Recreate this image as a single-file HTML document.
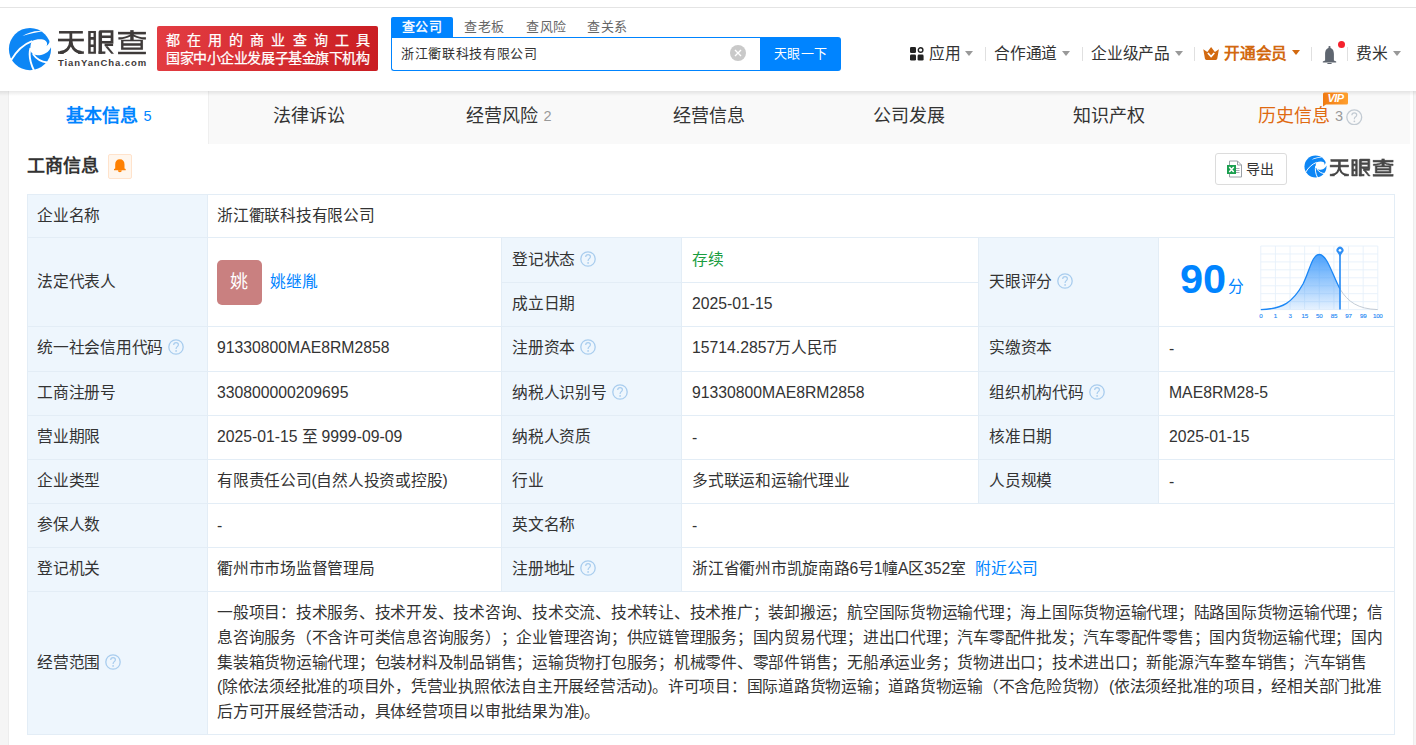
<!DOCTYPE html>
<html lang="zh-CN"><head><meta charset="utf-8">
<style>
*{margin:0;padding:0;box-sizing:border-box}
html,body{width:1416px;height:745px;overflow:hidden;background:#f5f5f5;font-family:"Liberation Sans",sans-serif;color:#333;text-spacing-trim:space-all}
.abs{position:absolute}
.nw{white-space:nowrap}
#topstrip{left:0;top:0;width:1416px;height:7px;background:#fff}
#topline{left:0;top:7px;width:1416px;height:1px;background:#e4e4e4}
#header{left:0;top:8px;width:1416px;height:83px;background:#fff}
#banner{left:157px;top:26px;width:221px;height:45px;border-radius:2px;background:linear-gradient(100deg,#e33d43 0%,#d42a2f 60%,#c91d22 100%)}
.bt{color:#fff;font-size:13px;font-weight:bold;line-height:16px}
.stab{top:17px;height:20px;font-size:13px;line-height:20px;color:#666;letter-spacing:0.5px}
#stab1{left:391px;width:62px;background:#0084ff;color:#fff;border-radius:2px 2px 0 0;text-align:center;-webkit-text-stroke:0.35px #fff}
#sinput{left:391px;top:37px;width:370px;height:34px;border:1px solid #0084ff;border-right:none;border-radius:0 0 0 3px;background:#fff}
#sbtn{left:760px;top:37px;width:81px;height:34px;background:#0084ff;border-radius:0 3px 3px 0;color:#fff;font-size:13px;line-height:34px;text-align:center;letter-spacing:0.5px}
.nav{top:43px;font-size:15.75px;line-height:22px;color:#333;letter-spacing:-0.25px}
.tri{width:0;height:0;border-left:4.5px solid transparent;border-right:4.5px solid transparent;border-top:5px solid #999}
.sep{top:47px;width:1px;height:14px;background:#e0e0e0}
#panel{left:9px;top:91px;width:1404px;height:660px;background:#fff}
#tabbar{left:9px;top:91px;width:1401px;height:53px;background:#f9f9f9}
#tabshadow{left:0;top:91px;width:1416px;height:5px;background:linear-gradient(rgba(0,0,0,0.085),rgba(0,0,0,0))}
.tab{top:89px;width:200px;height:54px;font-size:18px;line-height:54px;text-align:center;color:#333}
.tab .n{font-size:14.5px;color:#999;margin-left:5px;position:relative;top:-1.5px}
.hl{left:27px;width:1368px;height:1px;background:#e3edf6}
.vl{width:1px;background:#e3edf6}
.c{font-size:15.75px;color:#333;white-space:nowrap;letter-spacing:-0.25px}
.l{letter-spacing:0}
.q{display:inline-block;width:16px;height:16px;border:1px solid #b5d4f2;border-radius:50%;margin-left:6px;vertical-align:-2px;position:relative}
.q:after{content:"?";position:absolute;left:0;top:0;width:14px;line-height:14px;text-align:center;font-size:11px;color:#b5d4f2;font-style:normal}
.qg{display:inline-block;width:16.5px;height:16.5px;border:1.3px solid #c5ccd4;border-radius:50%;margin-left:5px;vertical-align:0px;position:relative;top:3px}
.qg:after{content:"?";position:absolute;left:0;top:0;width:13.9px;line-height:14px;text-align:center;font-size:12px;color:#bcc4cc;font-style:normal;font-weight:normal}
.qs{display:inline-block;margin-left:5px;vertical-align:-2px;color:#a9cdee}
.qg2{color:#c3cbd3;margin-left:5px;vertical-align:-3px}
</style></head><body>
<div class="abs" id="topstrip"></div>
<div class="abs" id="topline"></div>
<div class="abs" id="header"></div>

<!-- logo -->
<svg width="0" height="0" style="position:absolute">
 <defs>
  <symbol id="ic" viewBox="0 0 745 745">
   <circle cx="372" cy="374" r="357" fill="#0d86f5"/>
   <path d="M245 152 C340 92 470 55 585 72 C470 95 360 118 245 152 Z" fill="#fff"/>
   <path d="M50 565 C140 410 260 292 408 238" stroke="#fff" stroke-width="32" fill="none"/>
   <path d="M405 238 C480 205 580 195 640 235 C664 254 670 288 652 322 C682 300 700 272 708 238 L745 238 L745 345 L725 345 C700 420 600 480 500 478 C470 476 440 468 425 462 C395 440 375 400 378 360 C380 310 390 265 405 238 Z" fill="#fff"/>
   <path d="M380 355 C355 450 360 580 445 745" stroke="#fff" stroke-width="32" fill="none"/>
   <path d="M422 458 C480 540 560 592 665 602" stroke="#fff" stroke-width="32" fill="none"/>
  </symbol>
  <symbol id="tx" viewBox="0 0 1416 450">
   <g>
    <rect x="60" y="75" width="355" height="37"/>
    <rect x="45" y="190" width="385" height="38"/>
    <rect x="216" y="100" width="40" height="128"/>
    <path d="M236 215 C230 310 175 390 75 396" stroke-width="44" fill="none"/>
    <rect x="45" y="378" width="85" height="37"/>
    <path d="M236 215 C242 310 297 390 397 396" stroke-width="44" fill="none"/>
    <rect x="345" y="378" width="85" height="37"/>
    <path d="M495 75H610V415H495Z M532 105V165H575V105Z M532 205V275H575V205Z M532 312V385H575V312Z" fill-rule="evenodd"/>
    <path d="M650 90 Q650 65 675 65 H870 V262 H700 V415 H650 Z M700 102V142H830V102Z M700 178V225H830V178Z" fill-rule="evenodd"/>
    <rect x="650" y="380" width="100" height="35"/>
    <rect x="740" y="262" width="125" height="36"/>
    <path d="M745 300 L840 415 L878 415 L785 300 Z"/>
    <rect x="940" y="88" width="415" height="37"/>
    <rect x="1122" y="62" width="50" height="150"/>
    <path d="M1135 118 L1165 130 C1120 165 1040 190 975 200 L945 200 L945 168 L1000 168 C1050 158 1100 138 1135 118 Z"/>
    <path d="M1160 118 L1130 130 C1175 165 1255 190 1320 200 L1355 200 L1355 168 L1295 168 C1245 158 1195 138 1160 118 Z"/>
    <path d="M985 205H1310V355H985Z M1020 228V258H1275V228Z M1020 293V322H1275V293Z" fill-rule="evenodd"/>
    <rect x="940" y="385" width="415" height="35"/>
   </g>
  </symbol>
 </defs>
</svg>
<svg class="abs" style="left:8px;top:27px" width="44" height="44"><use href="#ic"/></svg>
<svg class="abs" style="left:55px;top:26px;fill:#3e3a39;stroke:#3e3a39" width="95" height="30.2" viewBox="0 0 1416 450" preserveAspectRatio="none"><use href="#tx"/></svg>
<div class="abs nw" style="left:58px;top:56.8px;font-size:9.5px;line-height:12px;font-weight:bold;color:#3e3a39;letter-spacing:0.9px">TianYanCha.com</div>

<div class="abs" id="banner"></div>
<div class="abs nw bt" style="left:166px;top:32px;font-size:14px;font-weight:normal;letter-spacing:7.1px;-webkit-text-stroke:0.25px #fff">都在用的商业查询工具</div>
<div class="abs nw bt" style="left:166px;top:50px;font-size:14px;font-weight:normal;letter-spacing:-0.43px;-webkit-text-stroke:0.25px #fff">国家中小企业发展子基金旗下机构</div>

<!-- search -->
<div class="abs stab" id="stab1">查公司</div>
<div class="abs stab nw" style="left:464px">查老板</div>
<div class="abs stab nw" style="left:526px">查风险</div>
<div class="abs stab nw" style="left:587px">查关系</div>
<div class="abs" id="sinput"></div>
<div class="abs nw" style="left:401px;top:43px;font-size:13px;line-height:22px;color:#333;letter-spacing:0.65px">浙江衢联科技有限公司</div>
<div class="abs" style="left:730px;top:45px;width:16px;height:16px;border-radius:50%;background:#c9c9c9"></div>
<svg class="abs" style="left:730px;top:45px" width="16" height="16" viewBox="0 0 16 16"><path d="M5 5L11 11M11 5L5 11" stroke="#fff" stroke-width="1.4"/></svg>
<div class="abs" id="sbtn">天眼一下</div>

<!-- right nav -->
<svg class="abs" style="left:910px;top:47px" width="14" height="14" viewBox="0 0 14 14">
  <rect x="0" y="0" width="6" height="6" rx="1.3" fill="#222"/>
  <circle cx="10.6" cy="3" r="2.3" fill="none" stroke="#222" stroke-width="1.4"/>
  <rect x="0" y="7.6" width="6" height="6" rx="1.3" fill="#222"/>
  <rect x="7.6" y="7.6" width="6" height="6" rx="1.3" fill="#222"/>
</svg>
<div class="abs nw nav" style="left:929px">应用</div>
<div class="abs tri" style="left:965px;top:51px"></div>
<div class="abs sep" style="left:985px"></div>
<div class="abs nw nav" style="left:994px">合作通道</div>
<div class="abs tri" style="left:1062px;top:51px"></div>
<div class="abs sep" style="left:1082px"></div>
<div class="abs nw nav" style="left:1091px">企业级产品</div>
<div class="abs tri" style="left:1175px;top:51px"></div>
<div class="abs sep" style="left:1194px"></div>
<svg class="abs" style="left:1203px;top:46.6px" width="16.2" height="13" viewBox="0 0 16.2 13">
  <path d="M0.3 2.2 L4.3 5 L8.1 0 L11.9 5 L15.9 2.2 L14.3 11.5 Q14.1 12.9 12.7 12.9 L3.5 12.9 Q2.1 12.9 1.9 11.5 Z" fill="#d2690f"/>
  <path d="M4.9 6 L8.1 9.5 L11.3 6" stroke="#fff" stroke-width="1.8" fill="none"/>
</svg>
<div class="abs nw nav" style="left:1224px;font-weight:bold;color:#d2690f">开通会员</div>
<div class="abs tri" style="left:1292px;top:50px;border-left-width:4px;border-right-width:4px;border-top:5px solid #d2690f"></div>
<div class="abs sep" style="left:1311px"></div>
<svg class="abs" style="left:1322px;top:46px" width="15" height="18" viewBox="0 0 15 18">
  <rect x="6.5" y="0" width="2" height="2.5" rx="0.8" fill="#5f6670"/>
  <path d="M7.5 2 C4.4 2 3.1 4.6 3.1 8 L3.1 14.6 L0.8 15.6 L0.8 16.6 L14.2 16.6 L14.2 15.6 L11.9 14.6 L11.9 8 C11.9 4.6 10.6 2 7.5 2 Z" fill="#5f6670"/>
  <rect x="5.3" y="17" width="4.4" height="1.2" rx="0.5" fill="#5f6670"/>
</svg>
<div class="abs" style="left:1338px;top:41px;width:7px;height:7px;border-radius:50%;background:#f5222d"></div>
<div class="abs sep" style="left:1347px"></div>
<div class="abs nw nav" style="left:1356px">费米</div>
<div class="abs tri" style="left:1393px;top:51px"></div>

<!-- panel -->
<div class="abs" id="panel"></div>
<div class="abs" id="tabbar"></div>
<div class="abs" style="left:9px;top:91px;width:199px;height:53px;background:#fff"></div>
<div class="abs" style="left:208px;top:91px;width:1px;height:53px;background:#efefef"></div>
<div class="abs" style="left:1412.5px;top:91px;width:1px;height:660px;background:#ededed"></div>
<div class="abs" style="left:8px;top:91px;width:1px;height:660px;background:#ededed"></div>
<div class="abs" id="tabshadow"></div>
<div class="abs tab nw" style="left:9px;color:#0084ff;font-weight:bold">基本信息<span class="n" style="color:#0084ff;font-weight:normal">5</span></div>
<div class="abs tab nw" style="left:209px">法律诉讼</div>
<div class="abs tab nw" style="left:409px">经营风险<span class="n">2</span></div>
<div class="abs tab nw" style="left:609px">经营信息</div>
<div class="abs tab nw" style="left:809px">公司发展</div>
<div class="abs tab nw" style="left:1009px">知识产权</div>
<div class="abs tab nw" style="left:1210.6px;color:#df6a12">历史信息<span class="n" style="margin-left:4.6px">3</span><svg class="qs qg2" style="margin-left:3.4px" width="16.5" height="16.5" viewBox="0 0 16 16"><circle cx="8" cy="8" r="7.2" fill="none" stroke="currentColor" stroke-width="1.3"/><path d="M5.7 6.1 C5.7 4.6 6.8 3.7 8.1 3.7 C9.5 3.7 10.4 4.6 10.4 5.8 C10.4 7.1 9.4 7.5 8.7 8.1 C8.2 8.5 8.1 9 8.1 10" fill="none" stroke="currentColor" stroke-width="1.2"/><circle cx="8.1" cy="11.9" r="0.85" fill="currentColor"/></svg></div>
<svg class="abs" style="left:1322px;top:92px" width="27" height="15" viewBox="0 0 27 15">
  <defs><linearGradient id="vg" x1="0" y1="0" x2="1" y2="0"><stop offset="0" stop-color="#f07a12"/><stop offset="1" stop-color="#ff9f2e"/></linearGradient></defs>
  <path d="M1 2 Q1 0.5 2.5 0.5 L24.5 0.5 Q26 0.5 26 2 L26 11 Q26 12.5 24.5 12.5 L4 12.5 L1 14.5 Z" fill="url(#vg)"/>
  <text x="13.5" y="10.3" text-anchor="middle" font-family="Liberation Sans" font-weight="bold" font-style="italic" font-size="11" fill="#fff" letter-spacing="-0.5">VIP</text>
</svg>

<!-- title row -->
<div class="abs nw" style="left:27px;top:154px;font-size:18px;line-height:24px;font-weight:bold;color:#333">工商信息</div>
<div class="abs" style="left:108px;top:154px;width:24px;height:25px;border:1px solid #ffe3cc;background:#fff6ed;border-radius:2px"></div>
<svg class="abs" style="left:113px;top:158.5px" width="14" height="15" viewBox="0 0 14 15">
  <path d="M6.85 0.3 C9.8 0.3 11.5 2.3 11.5 5.6 L11.5 9.4 L12.7 10 L12.7 11.3 L1 11.3 L1 10 L2.2 9.4 L2.2 5.6 C2.2 2.3 3.9 0.3 6.85 0.3 Z" fill="#ff8000"/>
  <path d="M4.9 11.2 A1.95 1.95 0 0 0 8.8 11.2 Z" fill="#ff8000"/>
</svg>
<div class="abs" style="left:1215px;top:153px;width:72px;height:32px;border:1px solid #dcdcdc;border-radius:3px;background:#fff"></div>
<svg class="abs" style="left:1226px;top:160px" width="17" height="18" viewBox="0 0 17 18">
  <path d="M3.5 1 L11.5 1 L15.5 5 L15.5 17 L3.5 17 Z" fill="#fff" stroke="#9aa0a6" stroke-width="1"/>
  <path d="M11.5 1 L11.5 5 L15.5 5" fill="none" stroke="#9aa0a6" stroke-width="1"/>
  <path d="M9.5 8.5 H13.5 M9.5 10.5 H13.5 M9.5 12.5 H13.5" stroke="#9aa0a6" stroke-width="0.9"/>
  <rect x="1" y="5" width="9" height="9" fill="#1a9f4f"/>
  <path d="M3.3 7 L7.7 12 M7.7 7 L3.3 12" stroke="#fff" stroke-width="1.5"/>
</svg>
<div class="abs nw" style="left:1246px;top:158px;font-size:14px;line-height:22px;color:#333;letter-spacing:-0.5px">导出</div>
<!-- small logo -->
<svg class="abs" style="left:1304px;top:155px" width="23" height="23"><use href="#ic"/></svg>
<svg class="abs" style="left:1328px;top:155.5px;fill:#474747;stroke:#474747;stroke-width:12" width="68" height="21.6" viewBox="0 0 1416 450" preserveAspectRatio="none"><use href="#tx"/></svg>

<!-- table backgrounds -->
<div class="abs" style="left:27px;top:194px;width:181px;height:541px;background:#eef6fd"></div>
<div class="abs" style="left:501px;top:237px;width:181px;height:355px;background:#eef6fd"></div>
<div class="abs" style="left:978px;top:237px;width:181px;height:267px;background:#eef6fd"></div>
<!-- horizontal lines -->
<div class="abs hl" style="top:194px"></div>
<div class="abs hl" style="top:237px"></div>
<div class="abs" style="left:501px;top:282px;width:478px;height:1px;background:#e3edf6"></div>
<div class="abs hl" style="top:326px"></div>
<div class="abs hl" style="top:371px"></div>
<div class="abs hl" style="top:415px"></div>
<div class="abs hl" style="top:459px"></div>
<div class="abs hl" style="top:503px"></div>
<div class="abs hl" style="top:547px"></div>
<div class="abs hl" style="top:591px"></div>
<div class="abs hl" style="top:734px"></div>
<!-- vertical lines -->
<div class="abs vl" style="left:27px;top:194px;height:541px"></div>
<div class="abs vl" style="left:207px;top:194px;height:541px"></div>
<div class="abs vl" style="left:1394px;top:194px;height:541px"></div>
<div class="abs vl" style="left:501px;top:237px;height:355px"></div>
<div class="abs vl" style="left:681px;top:237px;height:355px"></div>
<div class="abs vl" style="left:978px;top:237px;height:267px"></div>
<div class="abs vl" style="left:1158px;top:237px;height:267px"></div>

<!-- row 1 -->
<div class="abs c" style="left:37px;top:194px;height:44px;line-height:44px">企业名称</div>
<div class="abs c" style="left:217px;top:194px;height:44px;line-height:44px">浙江衢联科技有限公司</div>
<!-- row 2 -->
<div class="abs c" style="left:37px;top:238px;height:88px;line-height:88px">法定代表人</div>
<div class="abs" style="left:217px;top:260px;width:45px;height:45px;border-radius:5px;background:#c98080;color:#fff;font-size:18px;line-height:45px;text-align:center;text-indent:-2px">姚</div>
<div class="abs c" style="left:270px;top:238px;height:88px;line-height:88px;color:#0084ff">姚继胤</div>
<div class="abs c" style="left:512px;top:238px;height:44px;line-height:44px">登记状态<svg class="qs" width="16" height="16" viewBox="0 0 16 16"><circle cx="8" cy="8" r="7.2" fill="none" stroke="currentColor" stroke-width="1.3"/><path d="M5.7 6.1 C5.7 4.6 6.8 3.7 8.1 3.7 C9.5 3.7 10.4 4.6 10.4 5.8 C10.4 7.1 9.4 7.5 8.7 8.1 C8.2 8.5 8.1 9 8.1 10" fill="none" stroke="currentColor" stroke-width="1.2"/><circle cx="8.1" cy="11.9" r="0.85" fill="currentColor"/></svg></div>
<div class="abs c" style="left:692px;top:238px;height:44px;line-height:44px;color:#1a9d3f">存续</div>
<div class="abs c" style="left:512px;top:282px;height:44px;line-height:44px">成立日期</div>
<div class="abs c" style="left:692px;top:282px;height:44px;line-height:44px"><span class="l">2025-01-15</span></div>
<div class="abs c" style="left:989px;top:238px;height:88px;line-height:88px">天眼评分<svg class="qs" width="16" height="16" viewBox="0 0 16 16"><circle cx="8" cy="8" r="7.2" fill="none" stroke="currentColor" stroke-width="1.3"/><path d="M5.7 6.1 C5.7 4.6 6.8 3.7 8.1 3.7 C9.5 3.7 10.4 4.6 10.4 5.8 C10.4 7.1 9.4 7.5 8.7 8.1 C8.2 8.5 8.1 9 8.1 10" fill="none" stroke="currentColor" stroke-width="1.2"/><circle cx="8.1" cy="11.9" r="0.85" fill="currentColor"/></svg></div>
<!-- row 3 -->
<div class="abs c" style="left:37px;top:325px;height:45px;line-height:45px">统一社会信用代码<svg class="qs" width="16" height="16" viewBox="0 0 16 16"><circle cx="8" cy="8" r="7.2" fill="none" stroke="currentColor" stroke-width="1.3"/><path d="M5.7 6.1 C5.7 4.6 6.8 3.7 8.1 3.7 C9.5 3.7 10.4 4.6 10.4 5.8 C10.4 7.1 9.4 7.5 8.7 8.1 C8.2 8.5 8.1 9 8.1 10" fill="none" stroke="currentColor" stroke-width="1.2"/><circle cx="8.1" cy="11.9" r="0.85" fill="currentColor"/></svg></div>
<div class="abs c" style="left:217px;top:325px;height:45px;line-height:45px"><span class="l">91330800MAE8RM2858</span></div>
<div class="abs c" style="left:512px;top:325px;height:45px;line-height:45px">注册资本<svg class="qs" width="16" height="16" viewBox="0 0 16 16"><circle cx="8" cy="8" r="7.2" fill="none" stroke="currentColor" stroke-width="1.3"/><path d="M5.7 6.1 C5.7 4.6 6.8 3.7 8.1 3.7 C9.5 3.7 10.4 4.6 10.4 5.8 C10.4 7.1 9.4 7.5 8.7 8.1 C8.2 8.5 8.1 9 8.1 10" fill="none" stroke="currentColor" stroke-width="1.2"/><circle cx="8.1" cy="11.9" r="0.85" fill="currentColor"/></svg></div>
<div class="abs c" style="left:692px;top:325px;height:45px;line-height:45px"><span class="l">15714.2857</span>万人民币</div>
<div class="abs c" style="left:989px;top:325px;height:45px;line-height:45px">实缴资本</div>
<div class="abs c" style="left:1169px;top:326px;height:45px;line-height:45px">-</div>
<!-- row 4 -->
<div class="abs c" style="left:37px;top:371px;height:44px;line-height:44px">工商注册号</div>
<div class="abs c" style="left:217px;top:371px;height:44px;line-height:44px"><span class="l">330800000209695</span></div>
<div class="abs c" style="left:512px;top:371px;height:44px;line-height:44px">纳税人识别号<svg class="qs" width="16" height="16" viewBox="0 0 16 16"><circle cx="8" cy="8" r="7.2" fill="none" stroke="currentColor" stroke-width="1.3"/><path d="M5.7 6.1 C5.7 4.6 6.8 3.7 8.1 3.7 C9.5 3.7 10.4 4.6 10.4 5.8 C10.4 7.1 9.4 7.5 8.7 8.1 C8.2 8.5 8.1 9 8.1 10" fill="none" stroke="currentColor" stroke-width="1.2"/><circle cx="8.1" cy="11.9" r="0.85" fill="currentColor"/></svg></div>
<div class="abs c" style="left:692px;top:371px;height:44px;line-height:44px"><span class="l">91330800MAE8RM2858</span></div>
<div class="abs c" style="left:989px;top:371px;height:44px;line-height:44px">组织机构代码<svg class="qs" width="16" height="16" viewBox="0 0 16 16"><circle cx="8" cy="8" r="7.2" fill="none" stroke="currentColor" stroke-width="1.3"/><path d="M5.7 6.1 C5.7 4.6 6.8 3.7 8.1 3.7 C9.5 3.7 10.4 4.6 10.4 5.8 C10.4 7.1 9.4 7.5 8.7 8.1 C8.2 8.5 8.1 9 8.1 10" fill="none" stroke="currentColor" stroke-width="1.2"/><circle cx="8.1" cy="11.9" r="0.85" fill="currentColor"/></svg></div>
<div class="abs c" style="left:1169px;top:371px;height:44px;line-height:44px"><span class="l">MAE8RM28-5</span></div>
<!-- row 5 -->
<div class="abs c" style="left:37px;top:415px;height:44px;line-height:44px">营业期限</div>
<div class="abs c" style="left:217px;top:415px;height:44px;line-height:44px"><span class="l">2025-01-15</span> 至 <span class="l">9999-09-09</span></div>
<div class="abs c" style="left:512px;top:415px;height:44px;line-height:44px">纳税人资质</div>
<div class="abs c" style="left:692px;top:416px;height:44px;line-height:44px">-</div>
<div class="abs c" style="left:989px;top:415px;height:44px;line-height:44px">核准日期</div>
<div class="abs c" style="left:1169px;top:415px;height:44px;line-height:44px"><span class="l">2025-01-15</span></div>
<!-- row 6 -->
<div class="abs c" style="left:37px;top:459px;height:44px;line-height:44px">企业类型</div>
<div class="abs c" style="left:217px;top:459px;height:44px;line-height:44px">有限责任公司(自然人投资或控股)</div>
<div class="abs c" style="left:512px;top:459px;height:44px;line-height:44px">行业</div>
<div class="abs c" style="left:692px;top:459px;height:44px;line-height:44px">多式联运和运输代理业</div>
<div class="abs c" style="left:989px;top:459px;height:44px;line-height:44px">人员规模</div>
<div class="abs c" style="left:1169px;top:460px;height:44px;line-height:44px">-</div>
<!-- row 7 -->
<div class="abs c" style="left:37px;top:503px;height:44px;line-height:44px">参保人数</div>
<div class="abs c" style="left:217px;top:504px;height:44px;line-height:44px">-</div>
<div class="abs c" style="left:512px;top:503px;height:44px;line-height:44px">英文名称</div>
<div class="abs c" style="left:692px;top:504px;height:44px;line-height:44px">-</div>
<!-- row 8 -->
<div class="abs c" style="left:37px;top:547px;height:44px;line-height:44px">登记机关</div>
<div class="abs c" style="left:217px;top:547px;height:44px;line-height:44px">衢州市市场监督管理局</div>
<div class="abs c" style="left:512px;top:547px;height:44px;line-height:44px">注册地址<svg class="qs" width="16" height="16" viewBox="0 0 16 16"><circle cx="8" cy="8" r="7.2" fill="none" stroke="currentColor" stroke-width="1.3"/><path d="M5.7 6.1 C5.7 4.6 6.8 3.7 8.1 3.7 C9.5 3.7 10.4 4.6 10.4 5.8 C10.4 7.1 9.4 7.5 8.7 8.1 C8.2 8.5 8.1 9 8.1 10" fill="none" stroke="currentColor" stroke-width="1.2"/><circle cx="8.1" cy="11.9" r="0.85" fill="currentColor"/></svg></div>
<div class="abs c" style="left:692px;top:547px;height:44px;line-height:44px">浙江省衢州市凯旋南路6号1幢A区<span class="l">352</span>室<span style="color:#0084ff;margin-left:9px">附近公司</span></div>
<!-- row 9 -->
<div class="abs c" style="left:37px;top:591px;height:144px;line-height:144px">经营范围<svg class="qs" width="16" height="16" viewBox="0 0 16 16"><circle cx="8" cy="8" r="7.2" fill="none" stroke="currentColor" stroke-width="1.3"/><path d="M5.7 6.1 C5.7 4.6 6.8 3.7 8.1 3.7 C9.5 3.7 10.4 4.6 10.4 5.8 C10.4 7.1 9.4 7.5 8.7 8.1 C8.2 8.5 8.1 9 8.1 10" fill="none" stroke="currentColor" stroke-width="1.2"/><circle cx="8.1" cy="11.9" r="0.85" fill="currentColor"/></svg></div>
<div class="abs c" style="left:217px;top:601px;line-height:24.75px">一般项目：技术服务、技术开发、技术咨询、技术交流、技术转让、技术推广；装卸搬运；航空国际货物运输代理；海上国际货物运输代理；陆路国际货物运输代理；信</div>
<div class="abs c" style="left:217px;top:625.75px;line-height:24.75px">息咨询服务（不含许可类信息咨询服务）；企业管理咨询；供应链管理服务；国内贸易代理；进出口代理；汽车零配件批发；汽车零配件零售；国内货物运输代理；国内</div>
<div class="abs c" style="left:217px;top:650.5px;line-height:24.75px">集装箱货物运输代理；包装材料及制品销售；运输货物打包服务；机械零件、零部件销售；无船承运业务；货物进出口；技术进出口；新能源汽车整车销售；汽车销售</div>
<div class="abs c" style="left:217px;top:675.25px;line-height:24.75px">(除依法须经批准的项目外，凭营业执照依法自主开展经营活动)。许可项目：国际道路货物运输；道路货物运输（不含危险货物）(依法须经批准的项目，经相关部门批准</div>
<div class="abs c" style="left:217px;top:700px;line-height:24.75px">后方可开展经营活动，具体经营项目以审批结果为准)。</div>

<!-- score -->
<div class="abs nw" style="left:1180px;top:256px;font-size:41.5px;line-height:46px;font-weight:bold;color:#0084ff">90</div>
<div class="abs nw" style="left:1228px;top:276px;font-size:15.75px;line-height:22px;color:#0084ff">分</div>
<svg class="abs" style="left:1258px;top:242px" width="126" height="80" viewBox="0 0 126 80">
  <defs><linearGradient id="g1" x1="0" y1="0" x2="0" y2="1"><stop offset="0" stop-color="#3796fb" stop-opacity="0.9"/><stop offset="1" stop-color="#3796fb" stop-opacity="0.12"/></linearGradient></defs>
  <g stroke="#e6f0fa" stroke-width="0.9" fill="none"><path d="M2.80 4V67.6M17.42 4V67.6M32.04 4V67.6M46.66 4V67.6M61.28 4V67.6M75.90 4V67.6M90.52 4V67.6M105.14 4V67.6M119.76 4V67.6"/><path d="M2.8 4.00H119.76M2.8 11.95H119.76M2.8 19.90H119.76M2.8 27.85H119.76M2.8 35.80H119.76M2.8 43.75H119.76M2.8 51.70H119.76M2.8 59.65H119.76M2.8 67.60H119.76"/></g>
  <path d="M82 47 C90 60 100 67 119.76 67.6" fill="none" stroke="#c3ccd6" stroke-width="1"/>
  <path d="M2.8 67.6 C25 67 35 60 45 42 C52 28 54 12.5 61.3 12.5 C69 12.5 74 32 82 47 L82 67.6 Z" fill="url(#g1)"/>
  <path d="M2.8 67.6 C25 67 35 60 45 42 C52 28 54 12.5 61.3 12.5 C69 12.5 74 32 82 47" fill="none" stroke="#1b87f6" stroke-width="1.3"/>
  <path d="M82 10V67.6" stroke="#2f8ff5" stroke-width="1.7"/>
  <path d="M82 14.4 L79.4 10.6 A3.5 3.5 0 1 1 84.6 10.6 Z" fill="#2f8ff5"/>
  <circle cx="82" cy="8.3" r="1.35" fill="#fff"/>
  <g fill="#2b8cf5" stroke="#2b8cf5" stroke-width="0.15" font-size="6.2" font-family="Liberation Sans" text-anchor="middle" letter-spacing="-0.2"><text x="2.80" y="75.9">0</text><text x="17.42" y="75.9">1</text><text x="32.04" y="75.9">3</text><text x="46.66" y="75.9">15</text><text x="61.28" y="75.9">50</text><text x="75.90" y="75.9">85</text><text x="90.52" y="75.9">97</text><text x="105.14" y="75.9">99</text><text x="119.76" y="75.9">100</text></g>
</svg>

</body></html>
